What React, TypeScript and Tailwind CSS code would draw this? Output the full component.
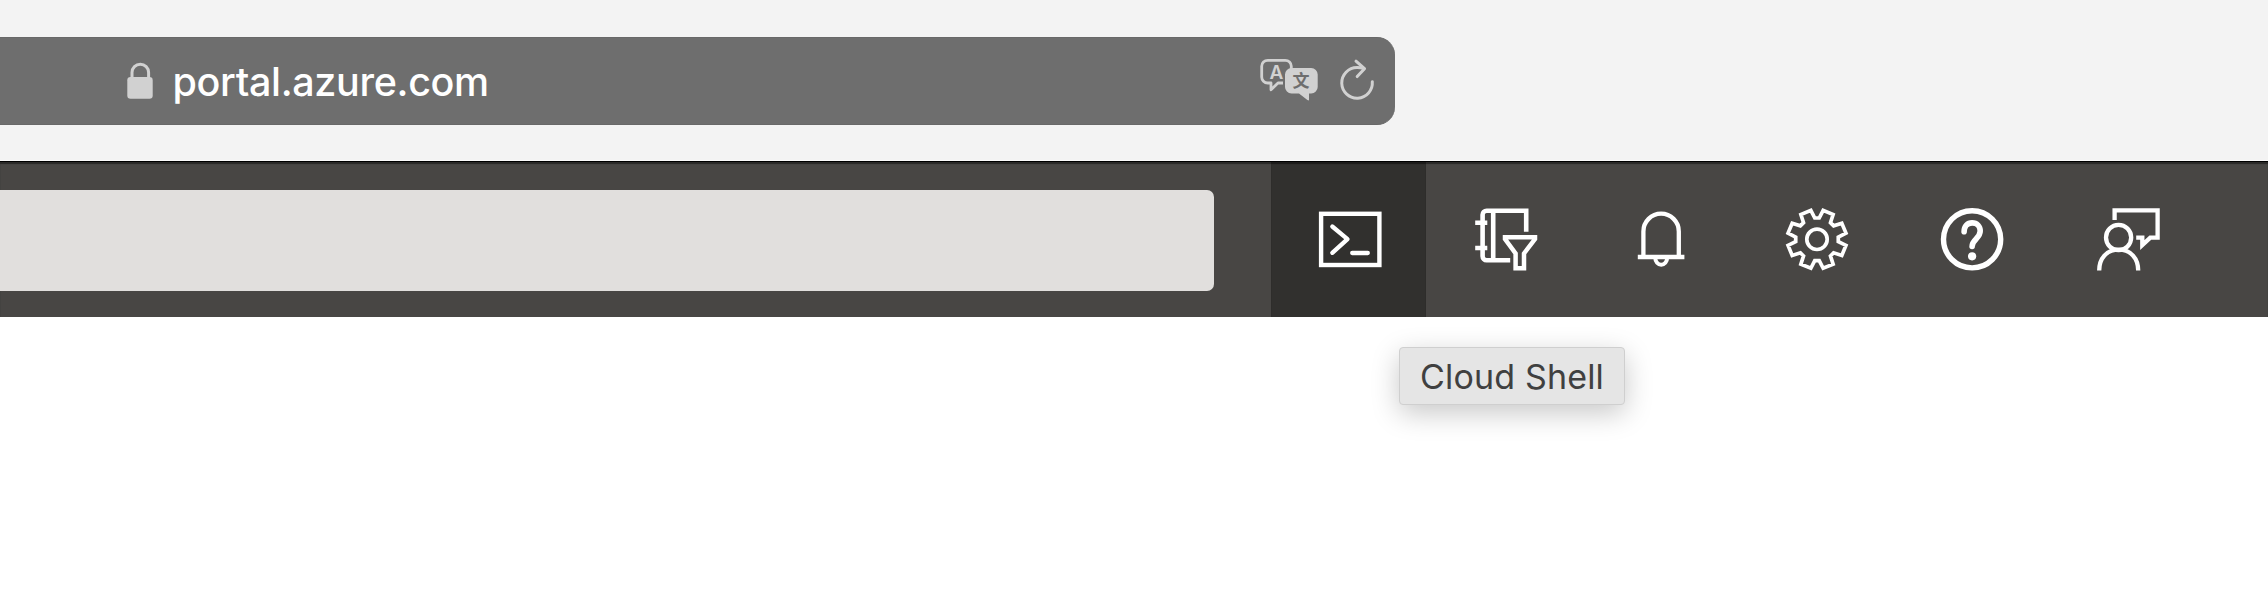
import type { ReactNode } from "react";

function gearPoints(): string {
  const points: string[] = [];
  const add = (deg: number, r: number) => {
    const a = (deg * Math.PI) / 180;
    points.push(`${(32 + r * Math.sin(a)).toFixed(2)},${(31.3 - r * Math.cos(a)).toFixed(2)}`);
  };
  for (let i = 0; i < 8; i++) {
    const base = i * 45;
    add(base - 6, 21.4);
    add(base + 6, 21.4);
    add(base + 12, 29.6);
    add(base + 33, 29.6);
  }
  return points.join(" ");
}

function BarIcon({ label, active = false, children }: { label: string; active?: boolean; children: ReactNode }) {
  return (
    <button
      aria-label={label}
      className={
        active
          ? "flex h-full w-[155.4px] shrink-0 items-center justify-center bg-[#31302e] pt-px pl-[3px] shadow-[inset_0_2px_1px_#1c1b1a]"
          : "flex h-full w-[155.5px] shrink-0 items-center justify-center pt-px pl-[3px]"
      }
    >
      <svg className="size-16 overflow-visible" viewBox="0 0 64 64" fill="none" stroke="#fff" strokeWidth="4.3">
        {children}
      </svg>
    </button>
  );
}

function AddressBar() {
  return (
    <header className="flex h-[161px] items-start border-b border-[#fafafa] bg-[#f3f3f3] pt-[37px]">
      <div className="flex h-[87.5px] w-[1395px] items-center rounded-r-[18px] border-y border-[#686868] bg-[#6e6e6e] pl-[126px]">
        <svg className="h-10 w-7 shrink-0" viewBox="0 0 28 40" fill="none">
          <path d="M6 18V11.5a8.3 8.3 0 0 1 16.6 0V18" stroke="#d1d1d1" strokeWidth="3" />
          <rect x="1.3" y="16" width="25.4" height="21.7" rx="3.2" fill="#d1d1d1" />
        </svg>
        <span className="mt-0.5 ml-[18.5px] font-[Inter] text-[39.5px] leading-[48px] font-[540] tracking-[-0.35px] text-white">
          portal.azure.com
        </span>
        <svg className="ml-auto h-12 w-16" viewBox="0 0 64 48" fill="none">
          <path
            d="M25 26H20L13 32.8V26H9.7a6 6 0 0 1-6-6V9.3a6 6 0 0 1 6-6H27.3a6 6 0 0 1 6 6V12"
            stroke="#d1d1d1"
            strokeWidth="2.8"
            strokeLinejoin="round"
          />
          <text x="18.3" y="21.8" textAnchor="middle" fontSize="19" fontWeight="600" fontFamily="Inter, sans-serif" fill="#d1d1d1">
            A
          </text>
          <path
            d="M33.5 11H53.2a6.5 6.5 0 0 1 6.5 6.5V30a6.5 6.5 0 0 1-6.5 6.5H51V42.5q0 1.6-1.6.6L41 36.5H33.5A6.5 6.5 0 0 1 27 30V17.5A6.5 6.5 0 0 1 33.5 11Z"
            fill="#d1d1d1"
          />
          <text
            x="43"
            y="30"
            textAnchor="middle"
            fontSize="17"
            fontWeight="700"
            fontFamily="'Noto Sans CJK SC', sans-serif"
            fill="#6e6e6e"
          >
            文
          </text>
        </svg>
        <svg className="mr-[17px] ml-4 h-12 w-10" viewBox="0 0 40 48" fill="none" stroke="#d1d1d1" strokeWidth="3" strokeLinecap="round" strokeLinejoin="round">
          <path d="M34.3 24.7A15.3 15.3 0 1 1 19 10.6Q23 10.6 26 11.6" />
          <path d="M18 4.2L26.5 11.7L19.2 19.6" />
        </svg>
      </div>
    </header>
  );
}

function PortalBar() {
  return (
    <nav className="flex h-[156px] items-stretch border-t border-black bg-[#484644] shadow-[inset_0_2px_1px_#2a2928]">
      <div className="mt-[28px] h-[101px] w-[1213.5px] shrink-0 rounded-r-[7px] bg-[#e1dfdd]" />
      <div className="ml-[57.5px] flex">
        <BarIcon label="Cloud Shell" active>
          <rect x="3.1" y="5.8" width="58.3" height="51.2" strokeWidth="4.4" />
          <path d="M14.3 18.5L29.5 31.1L14.3 44.8M34.2 45H49.8" strokeLinecap="round" strokeLinejoin="round" />
        </BarIcon>
        <BarIcon label="Directories">
          <path d="M52.2 23.7V2.7H12.6a4 4 0 0 0-4 4V48.3a4 4 0 0 0 4 4H36.2M19.2 2.7V52.3M1.2 14.7H13.3M1.2 40H13.3" strokeWidth="4.6" />
          <path d="M31 29.3H61V31L50 45.5V60.3H41.6V45.5L31 31Z" strokeWidth="4.5" />
        </BarIcon>
        <BarIcon label="Notifications">
          <path d="M14.4 49V23.4a17.7 17.7 0 0 1 35.4 0V49M8.8 49H55.4" />
          <path d="M26.3 50a5.9 6.8 0 0 0 11.8 0" strokeWidth="4" />
        </BarIcon>
        <BarIcon label="Settings">
          <polygon points={gearPoints()} strokeWidth="3.7" />
          <circle cx="32" cy="31.3" r="10.2" strokeWidth="3.7" />
        </BarIcon>
        <BarIcon label="Help">
          <circle cx="32.1" cy="31.3" r="28.6" strokeWidth="5.4" />
          <path
            d="M24.1 23.7C24.1 18 27.5 14.9 32.1 14.9C37 14.9 40.2 18.3 40.2 23.1C40.2 30.5 32.1 31.5 32.1 38.5"
            strokeWidth="5.6"
            strokeLinecap="round"
          />
          <circle cx="32.1" cy="48.3" r="4.1" fill="#fff" stroke="none" />
        </BarIcon>
        <BarIcon label="Feedback">
          <circle cx="22.6" cy="29.5" r="12.6" />
          <path d="M3.2 62.5C3.2 50.5 10.5 41.7 22.7 41.7S42.2 50.5 42.2 62.5" />
          <path d="M18.6 12V2.3H61.6V29.6H54.3L46.3 37V29.6H40.2" />
        </BarIcon>
      </div>
    </nav>
  );
}

export default function App() {
  return (
    <div className="h-[600px] w-[2268px] overflow-hidden bg-white">
      <AddressBar />
      <PortalBar />
      <div className="mt-[30px] ml-[1399px] flex h-[58px] w-[226px] items-center justify-center rounded-[4px] border border-[#cfcfcf] bg-[#e5e5e5] shadow-[0_8px_28px_rgba(0,0,0,0.22)]">
        <span className="mt-0.5 font-[Inter] text-[34px] leading-none font-[430] tracking-[0.15px] whitespace-nowrap text-[#404040]">
          Cloud Shell
        </span>
      </div>
    </div>
  );
}
